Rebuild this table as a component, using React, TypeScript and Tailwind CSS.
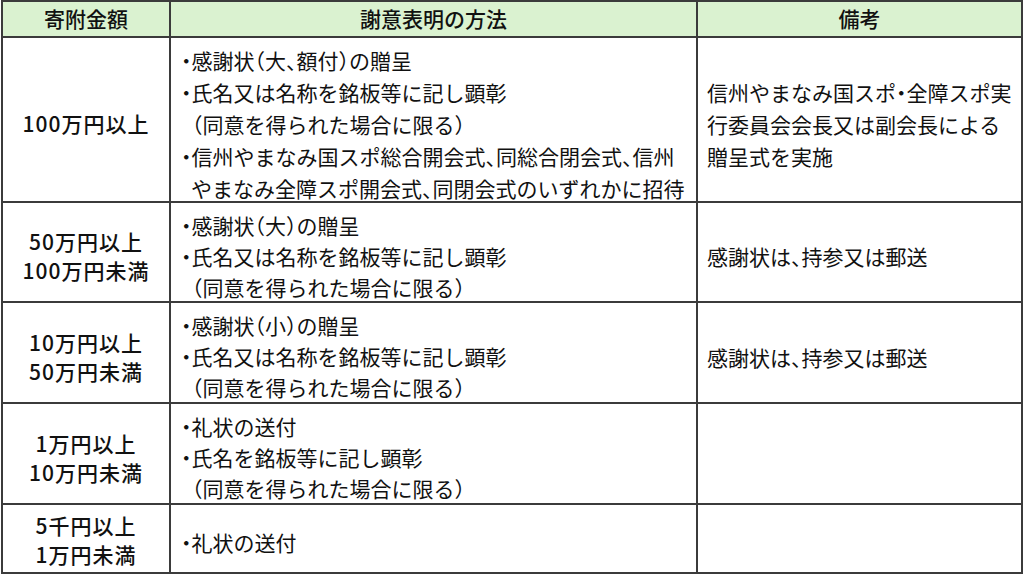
type Line = { t: string; k: 'b' | 'c' | 'p' };

type Row = {
  h: string;
  amount: string[];
  methods: Line[];
  note: string[];
  lead?: string;
  amountPad?: string;
};

const b = (t: string): Line => ({ t: '・' + t, k: 'b' });
const c = (t: string): Line => ({ t, k: 'c' });
const p = (t: string): Line => ({ t, k: 'p' });

const consent = p('（同意を得られた場合に限る）');

const rows: Row[] = [
  {
    h: 'h-[165px]',
    amount: ['100万円以上'],
    methods: [
      b('感謝状（大、額付）の贈呈'),
      b('氏名又は名称を銘板等に記し顕彰'),
      consent,
      b('信州やまなみ国スポ総合開会式、同総合閉会式、信州'),
      c('やまなみ全障スポ開会式、同閉会式のいずれかに招待'),
    ],
    note: ['信州やまなみ国スポ・全障スポ実', '行委員会会長又は副会長による', '贈呈式を実施'],
    lead: 'leading-[32px]',
  },
  {
    h: 'h-[100px]',
    amount: ['50万円以上', '100万円未満'],
    methods: [b('感謝状（大）の贈呈'), b('氏名又は名称を銘板等に記し顕彰'), consent],
    note: ['感謝状は、持参又は郵送'],
  },
  {
    h: 'h-[101px]',
    amount: ['10万円以上', '50万円未満'],
    methods: [b('感謝状（小）の贈呈'), b('氏名又は名称を銘板等に記し顕彰'), consent],
    note: ['感謝状は、持参又は郵送'],
  },
  {
    h: 'h-[101px]',
    amount: ['1万円以上', '10万円未満'],
    methods: [b('礼状の送付'), b('氏名を銘板等に記し顕彰'), consent],
    note: [],
  },
  {
    h: 'h-[69px]',
    amount: ['5千円以上', '1万円未満'],
    methods: [b('礼状の送付')],
    note: [],
    amountPad: 'pt-[2px]',
  },
];

const cell = 'flex flex-col justify-center border-r-2 border-b-2 border-[#3b3b3b]';

function MethodLine({ line }: { line: Line }) {
  const indent = line.k === 'b' ? '' : line.k === 'c' ? 'pl-[10px]' : 'pl-[11px]';
  return <div className={`whitespace-nowrap ${indent}`}>{line.t}</div>;
}

export default function App() {
  return (
    <div className="w-[1024px] h-[581px] bg-white text-[#111] text-[21px] font-['Noto_Sans_CJK_JP',sans-serif] [font-feature-settings:'halt']">
      <div className="ml-px w-[1022px] grid grid-cols-[168px_527px_325px] border-l-2 border-t-2 border-[#3b3b3b]">
        {/* header */}
        <div className={`${cell} h-[36px] items-center bg-[#daf2d0] font-medium`}>寄附金額</div>
        <div className={`${cell} h-[36px] items-center bg-[#daf2d0] font-medium`}>謝意表明の方法</div>
        <div className={`${cell} h-[36px] items-center bg-[#daf2d0] font-medium`}>備考</div>

        {rows.map((r, i) => (
          <div key={i} className="contents">
            <div
              className={`${cell} ${r.h} items-center ${r.amountPad ?? 'pt-[8px]'} font-medium tracking-[1px] leading-[29px]`}
            >
              {r.amount.map((a) => (
                <div key={a} className="whitespace-nowrap">
                  {a}
                </div>
              ))}
            </div>
            <div className={`${cell} ${r.h} pt-[8px] pl-[10px] ${r.lead ?? 'leading-[31px]'}`}>
              {r.methods.map((m, j) => (
                <MethodLine key={j} line={m} />
              ))}
            </div>
            <div className={`${cell} ${r.h} pt-[8px] pl-[9px] leading-[32px]`}>
              {r.note.map((n) => (
                <div key={n} className="whitespace-nowrap">
                  {n}
                </div>
              ))}
            </div>
          </div>
        ))}
      </div>
    </div>
  );
}
